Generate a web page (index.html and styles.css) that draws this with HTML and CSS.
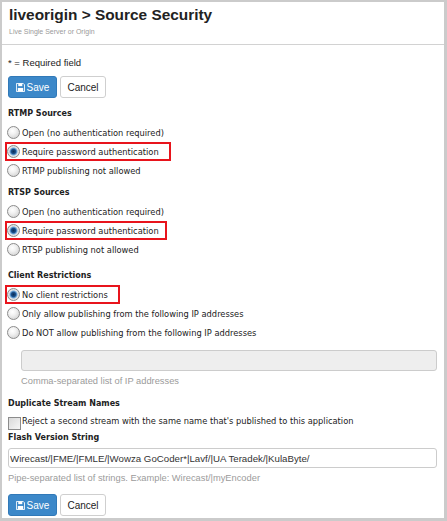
FILE: index.html
```html
<!DOCTYPE html>
<html>
  <head>
    <title>Source Security</title>
    <link rel="stylesheet" href="styles.css">
  </head>
  <body>
    <div class="panel">
      <div class="header">
        <h1>liveorigin &gt; Source Security</h1>
        <div class="subtitle">Live Single Server or Origin</div>
      </div>

      <div class="content">
        <div class="required">* = Required field</div>

        <div class="actions">
          <button class="btn btn-save">
            <svg class="icon" viewBox="0 0 10 10" width="9" height="9">
              <path d="M0.5 0.5h7.5l1.5 1.5v7.5h-9z" fill="none" stroke="#fff" stroke-width="1"/>
              <rect x="2.5" y="0.5" width="4.5" height="3" fill="#fff"/>
              <rect x="2" y="5.5" width="6" height="4" fill="#fff"/>
            </svg>Save</button>
          <button class="btn btn-cancel">Cancel</button>
        </div>

        <div class="field-label first">RTMP Sources</div>
        <label class="option"><input type="radio" name="rtmp"> Open (no authentication required)</label>
        <label class="option hl"><input type="radio" name="rtmp" checked> Require password authentication</label>
        <label class="option"><input type="radio" name="rtmp"> RTMP publishing not allowed</label>

        <div class="field-label">RTSP Sources</div>
        <label class="option"><input type="radio" name="rtsp"> Open (no authentication required)</label>
        <label class="option hl hl-short"><input type="radio" name="rtsp" checked> Require password authentication</label>
        <label class="option"><input type="radio" name="rtsp"> RTSP publishing not allowed</label>

        <div class="field-label client">Client Restrictions</div>
        <label class="option hl"><input type="radio" name="client" checked> No client restrictions</label>
        <label class="option"><input type="radio" name="client"> Only allow publishing from the following IP addresses</label>
        <label class="option"><input type="radio" name="client"> Do NOT allow publishing from the following IP addresses</label>

        <input type="text" class="text-input ip-list" disabled>
        <div class="help indent">Comma-separated list of IP addresses</div>

        <div class="field-label dup">Duplicate Stream Names</div>
        <label class="check"><input type="checkbox">Reject a second stream with the same name that's published to this application</label>

        <div class="field-label flash">Flash Version String</div>
        <input type="text" class="text-input flash-input" value="Wirecast/|FME/|FMLE/|Wowza GoCoder*|Lavf/|UA Teradek/|KulaByte/">
        <div class="help">Pipe-separated list of strings. Example: Wirecast/|myEncoder</div>

        <div class="actions bottom">
          <button class="btn btn-save">
            <svg class="icon" viewBox="0 0 10 10" width="9" height="9">
              <path d="M0.5 0.5h7.5l1.5 1.5v7.5h-9z" fill="none" stroke="#fff" stroke-width="1"/>
              <rect x="2.5" y="0.5" width="4.5" height="3" fill="#fff"/>
              <rect x="2" y="5.5" width="6" height="4" fill="#fff"/>
            </svg>Save</button>
          <button class="btn btn-cancel">Cancel</button>
        </div>
      </div>
    </div>
  </body>
</html>
```

FILE: styles.css
```css
body {
  margin: 0;
  font-family: "DejaVu Sans", Verdana, sans-serif;
  font-size: 8.3px;
  color: #222;
  background: #fff;
}

.panel {
  width: 447px;
  height: 521px;
  box-sizing: border-box;
  border: 2px solid #cbcbcb;
  border-right-width: 3px;
  border-bottom-width: 3px;
  overflow: hidden;
}

.header {
  padding: 4px 7px 7px 7px;
  border-bottom: 1px solid #d2d2d2;
}

h1 {
  margin: 0;
  font-family: "Liberation Sans", Arial, sans-serif;
  font-size: 15.4px;
  line-height: 18px;
  font-weight: bold;
  color: #222;
}

.subtitle {
  margin-top: 3px;
  font-family: "Liberation Sans", Arial, sans-serif;
  font-size: 7px;
  line-height: 10px;
  color: #9a9a9a;
}

.content {
  padding: 0 8px 0 6px;
}

.required {
  margin-top: 11px;
  font-family: "Liberation Sans", Arial, sans-serif;
  font-size: 9.5px;
  line-height: 14px;
  color: #222;
}

.actions {
  display: flex;
  gap: 3px;
  margin-top: 6px;
}

.actions.bottom {
  margin-top: 9px;
}

.btn {
  height: 22px;
  box-sizing: border-box;
  border-radius: 3px;
  font-family: "Liberation Sans", Arial, sans-serif;
  font-size: 10px;
  padding: 0;
  display: flex;
  align-items: center;
  justify-content: center;
  cursor: pointer;
}

.btn-save {
  width: 49px;
  background-color: #3c88c9;
  border: 1px solid #3179b8;
  color: white;
}

.btn-save .icon {
  margin-right: 2px;
}

.btn-cancel {
  width: 46px;
  background: white;
  border: 1px solid #cfcfcf;
  color: #222;
}

.field-label {
  font-size: 8px;
  font-weight: bold;
  line-height: 19px;
  margin-top: 3px;
  color: #222;
}

.field-label.first {
  margin-top: 6px;
}

.field-label.client {
  margin-top: 7px;
}

.field-label.dup {
  margin-top: 6px;
}

.field-label.flash {
  margin-top: 1px;
  line-height: 16px;
}

.option {
  display: flex;
  align-items: center;
  width: max-content;
  height: 19px;
  margin-left: -1px;
}

.option input[type="radio"] {
  appearance: none;
  width: 13px;
  height: 13px;
  margin: 0 2px 0 0;
  border: 1px solid #8c8c8c;
  border-radius: 50%;
  box-sizing: border-box;
  background: radial-gradient(circle at 40% 35%, #ffffff 0, #f2f2f2 35%, #c9c9c9 100%);
}

.option input[type="radio"]:checked {
  background: radial-gradient(circle at 50% 50%, #0b2d55 0, #1b4f8a 2.2px, #6aa4d8 3.4px, #e6e6e6 4.5px, #cfcfcf 100%);
}

.option.hl {
  outline: 2px solid #e8141c;
  outline-offset: -1px;
  height: 17px;
  margin: 1px 0 1px -2px;
  padding: 0 11px 0 1px;
}

.option.hl.hl-short {
  padding-right: 7px;
}

.text-input {
  display: block;
  box-sizing: border-box;
  border: 1px solid #cccccc;
  border-radius: 3px;
  font-family: "Liberation Sans", Arial, sans-serif;
  font-size: 9.4px;
  color: #333;
  padding: 0 1px;
}

.ip-list {
  margin: 8px 0 0 13px;
  width: 416px;
  height: 21px;
  background: #eeeeee;
}

.flash-input {
  margin-top: 2px;
  width: 429px;
  height: 20px;
  background: white;
  font-size: 9.7px;
}

.help {
  margin-top: 3px;
  font-family: "Liberation Sans", Arial, sans-serif;
  font-size: 9.3px;
  line-height: 14px;
  color: #9b9b9b;
}

.help.indent {
  margin-left: 13px;
}

.check {
  display: flex;
  align-items: flex-start;
  line-height: 12px;
  height: 14px;
  margin-top: 2px;
}

.check input[type="checkbox"] {
  appearance: none;
  width: 13px;
  height: 13px;
  margin: 2px 1px 0 0;
  border: 1px solid #8c8c8c;
  box-sizing: border-box;
  background: linear-gradient(135deg, #d9d9d9, #f7f7f7);
}
```
